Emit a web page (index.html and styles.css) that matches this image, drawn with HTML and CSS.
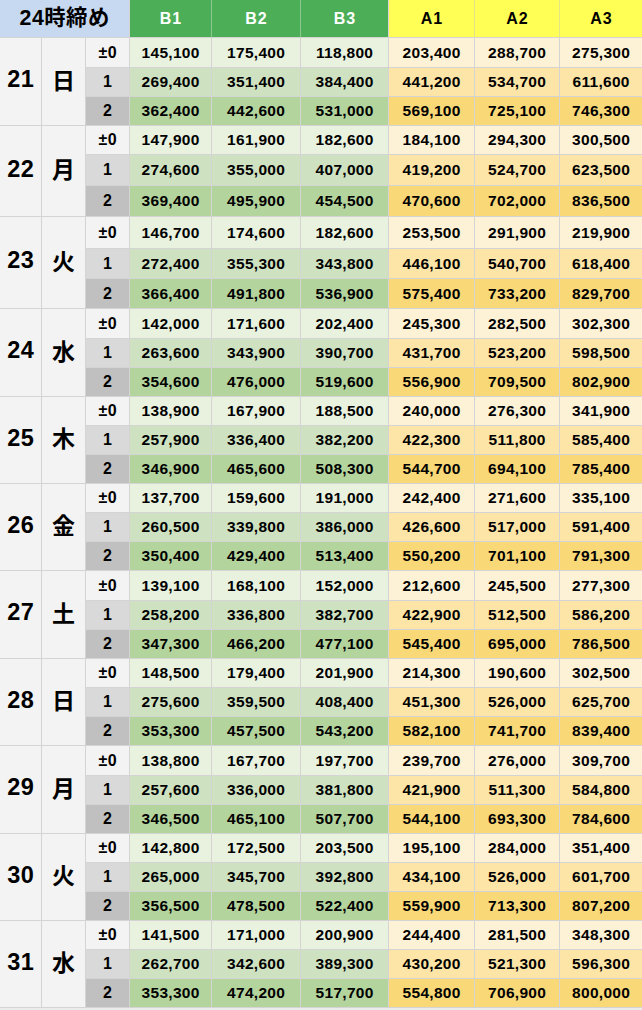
FILE: index.html
```html
<!DOCTYPE html>
<html lang="ja">
<head>
<meta charset="utf-8">
<title>24時締め</title>
<link rel="stylesheet" href="styles.css">
</head>
<body>
<div class="sheet">
  <div class="c head-title">24時締め</div>
  <div class="c head-b">B1</div>
  <div class="c head-b">B2</div>
  <div class="c head-b end">B3</div>
  <div class="c head-a">A1</div>
  <div class="c head-a">A2</div>
  <div class="c head-a last">A3</div>

  <div class="c day">21</div><div class="c wd">日</div>
  <div class="c sub s0">±0</div><div class="c b0">145,100</div><div class="c b0">175,400</div><div class="c b0">118,800</div><div class="c a0">203,400</div><div class="c a0">288,700</div><div class="c a0 last">275,300</div>
  <div class="c sub s1">1</div><div class="c b1">269,400</div><div class="c b1">351,400</div><div class="c b1">384,400</div><div class="c a1">441,200</div><div class="c a1">534,700</div><div class="c a1 last">611,600</div>
  <div class="c sub s2">2</div><div class="c b2">362,400</div><div class="c b2">442,600</div><div class="c b2">531,000</div><div class="c a2">569,100</div><div class="c a2">725,100</div><div class="c a2 last">746,300</div>

  <div class="c day">22</div><div class="c wd">月</div>
  <div class="c sub s0">±0</div><div class="c b0">147,900</div><div class="c b0">161,900</div><div class="c b0">182,600</div><div class="c a0">184,100</div><div class="c a0">294,300</div><div class="c a0 last">300,500</div>
  <div class="c sub s1">1</div><div class="c b1">274,600</div><div class="c b1">355,000</div><div class="c b1">407,000</div><div class="c a1">419,200</div><div class="c a1">524,700</div><div class="c a1 last">623,500</div>
  <div class="c sub s2">2</div><div class="c b2">369,400</div><div class="c b2">495,900</div><div class="c b2">454,500</div><div class="c a2">470,600</div><div class="c a2">702,000</div><div class="c a2 last">836,500</div>

  <div class="c day">23</div><div class="c wd">火</div>
  <div class="c sub s0">±0</div><div class="c b0">146,700</div><div class="c b0">174,600</div><div class="c b0">182,600</div><div class="c a0">253,500</div><div class="c a0">291,900</div><div class="c a0 last">219,900</div>
  <div class="c sub s1">1</div><div class="c b1">272,400</div><div class="c b1">355,300</div><div class="c b1">343,800</div><div class="c a1">446,100</div><div class="c a1">540,700</div><div class="c a1 last">618,400</div>
  <div class="c sub s2">2</div><div class="c b2">366,400</div><div class="c b2">491,800</div><div class="c b2">536,900</div><div class="c a2">575,400</div><div class="c a2">733,200</div><div class="c a2 last">829,700</div>

  <div class="c day">24</div><div class="c wd">水</div>
  <div class="c sub s0">±0</div><div class="c b0">142,000</div><div class="c b0">171,600</div><div class="c b0">202,400</div><div class="c a0">245,300</div><div class="c a0">282,500</div><div class="c a0 last">302,300</div>
  <div class="c sub s1">1</div><div class="c b1">263,600</div><div class="c b1">343,900</div><div class="c b1">390,700</div><div class="c a1">431,700</div><div class="c a1">523,200</div><div class="c a1 last">598,500</div>
  <div class="c sub s2">2</div><div class="c b2">354,600</div><div class="c b2">476,000</div><div class="c b2">519,600</div><div class="c a2">556,900</div><div class="c a2">709,500</div><div class="c a2 last">802,900</div>

  <div class="c day">25</div><div class="c wd">木</div>
  <div class="c sub s0">±0</div><div class="c b0">138,900</div><div class="c b0">167,900</div><div class="c b0">188,500</div><div class="c a0">240,000</div><div class="c a0">276,300</div><div class="c a0 last">341,900</div>
  <div class="c sub s1">1</div><div class="c b1">257,900</div><div class="c b1">336,400</div><div class="c b1">382,200</div><div class="c a1">422,300</div><div class="c a1">511,800</div><div class="c a1 last">585,400</div>
  <div class="c sub s2">2</div><div class="c b2">346,900</div><div class="c b2">465,600</div><div class="c b2">508,300</div><div class="c a2">544,700</div><div class="c a2">694,100</div><div class="c a2 last">785,400</div>

  <div class="c day">26</div><div class="c wd">金</div>
  <div class="c sub s0">±0</div><div class="c b0">137,700</div><div class="c b0">159,600</div><div class="c b0">191,000</div><div class="c a0">242,400</div><div class="c a0">271,600</div><div class="c a0 last">335,100</div>
  <div class="c sub s1">1</div><div class="c b1">260,500</div><div class="c b1">339,800</div><div class="c b1">386,000</div><div class="c a1">426,600</div><div class="c a1">517,000</div><div class="c a1 last">591,400</div>
  <div class="c sub s2">2</div><div class="c b2">350,400</div><div class="c b2">429,400</div><div class="c b2">513,400</div><div class="c a2">550,200</div><div class="c a2">701,100</div><div class="c a2 last">791,300</div>

  <div class="c day">27</div><div class="c wd">土</div>
  <div class="c sub s0">±0</div><div class="c b0">139,100</div><div class="c b0">168,100</div><div class="c b0">152,000</div><div class="c a0">212,600</div><div class="c a0">245,500</div><div class="c a0 last">277,300</div>
  <div class="c sub s1">1</div><div class="c b1">258,200</div><div class="c b1">336,800</div><div class="c b1">382,700</div><div class="c a1">422,900</div><div class="c a1">512,500</div><div class="c a1 last">586,200</div>
  <div class="c sub s2">2</div><div class="c b2">347,300</div><div class="c b2">466,200</div><div class="c b2">477,100</div><div class="c a2">545,400</div><div class="c a2">695,000</div><div class="c a2 last">786,500</div>

  <div class="c day">28</div><div class="c wd">日</div>
  <div class="c sub s0">±0</div><div class="c b0">148,500</div><div class="c b0">179,400</div><div class="c b0">201,900</div><div class="c a0">214,300</div><div class="c a0">190,600</div><div class="c a0 last">302,500</div>
  <div class="c sub s1">1</div><div class="c b1">275,600</div><div class="c b1">359,500</div><div class="c b1">408,400</div><div class="c a1">451,300</div><div class="c a1">526,000</div><div class="c a1 last">625,700</div>
  <div class="c sub s2">2</div><div class="c b2">353,300</div><div class="c b2">457,500</div><div class="c b2">543,200</div><div class="c a2">582,100</div><div class="c a2">741,700</div><div class="c a2 last">839,400</div>

  <div class="c day">29</div><div class="c wd">月</div>
  <div class="c sub s0">±0</div><div class="c b0">138,800</div><div class="c b0">167,700</div><div class="c b0">197,700</div><div class="c a0">239,700</div><div class="c a0">276,000</div><div class="c a0 last">309,700</div>
  <div class="c sub s1">1</div><div class="c b1">257,600</div><div class="c b1">336,000</div><div class="c b1">381,800</div><div class="c a1">421,900</div><div class="c a1">511,300</div><div class="c a1 last">584,800</div>
  <div class="c sub s2">2</div><div class="c b2">346,500</div><div class="c b2">465,100</div><div class="c b2">507,700</div><div class="c a2">544,100</div><div class="c a2">693,300</div><div class="c a2 last">784,600</div>

  <div class="c day">30</div><div class="c wd">火</div>
  <div class="c sub s0">±0</div><div class="c b0">142,800</div><div class="c b0">172,500</div><div class="c b0">203,500</div><div class="c a0">195,100</div><div class="c a0">284,000</div><div class="c a0 last">351,400</div>
  <div class="c sub s1">1</div><div class="c b1">265,000</div><div class="c b1">345,700</div><div class="c b1">392,800</div><div class="c a1">434,100</div><div class="c a1">526,000</div><div class="c a1 last">601,700</div>
  <div class="c sub s2">2</div><div class="c b2">356,500</div><div class="c b2">478,500</div><div class="c b2">522,400</div><div class="c a2">559,900</div><div class="c a2">713,300</div><div class="c a2 last">807,200</div>

  <div class="c day">31</div><div class="c wd">水</div>
  <div class="c sub s0">±0</div><div class="c b0">141,500</div><div class="c b0">171,000</div><div class="c b0">200,900</div><div class="c a0">244,400</div><div class="c a0">281,500</div><div class="c a0 last">348,300</div>
  <div class="c sub s1">1</div><div class="c b1">262,700</div><div class="c b1">342,600</div><div class="c b1">389,300</div><div class="c a1">430,200</div><div class="c a1">521,300</div><div class="c a1 last">596,300</div>
  <div class="c sub s2">2</div><div class="c b2">353,300</div><div class="c b2">474,200</div><div class="c b2">517,700</div><div class="c a2">554,800</div><div class="c a2">706,900</div><div class="c a2 last">800,000</div>
</div>
</body>
</html>
```

FILE: styles.css
```css
html, body {
  margin: 0;
  padding: 0;
  background: #ececec;
}

body {
  font-family: "Liberation Sans", Arial, "Noto Sans CJK JP", sans-serif;
  font-weight: 700;
  color: #000;
}

.sheet {
  display: grid;
  width: 642px;
  grid-template-columns: 42px 44px 44px 82px 89px 88px 86px 85px 82px;
  grid-template-rows:
    38px
    30px 29px 29px
    29px 31px 31px
    32px 30px 30px
    30px 29px 29px
    29px 29px 29px
    29px 29px 29px
    30px 29px 29px
    29px 29px 29px
    30px 29px 29px
    29px 29px 29px
    29px 29px 29px;
  background: #fff;
}

.c {
  box-sizing: border-box;
  display: flex;
  align-items: center;
  justify-content: center;
  border-right: 1px solid #d4d4d4;
  border-bottom: 1px solid #d4d4d4;
  font-size: 15.5px;
  letter-spacing: 0.3px;
  padding-left: 0.3px;
  line-height: 1;
  white-space: nowrap;
}

.c.last {
  border-right: none;
}

.head-title {
  grid-column: span 3;
  background: #c6d9f1;
  font-size: 21.33px;
  letter-spacing: 0.5px;
}

.head-b {
  background: #4caf57;
  border-right-color: #8cc992;
  color: #fff;
  font-size: 16px;
  letter-spacing: 1px;
  padding-left: 1px;
}

.head-b.end {
  border-right-color: #d4d4d4;
}

.head-a {
  background: #ffff55;
  border-right-color: #e4e48a;
  font-size: 16px;
  letter-spacing: 1px;
  padding-left: 1px;
}

.day {
  grid-row: span 3;
  background: #f3f3f3;
  font-size: 23.5px;
  letter-spacing: 0.6px;
  padding-left: 0.6px;
  padding-bottom: 3px;
}

.wd {
  grid-row: span 3;
  background: #f3f3f3;
  font-family: "Noto Sans CJK JP", sans-serif;
  font-size: 23px;
  letter-spacing: 0;
  padding-left: 0;
  padding-bottom: 5px;
}

.sub {
  font-size: 16px;
  letter-spacing: 0.5px;
  padding-left: 0.5px;
}

.s0 { background: #f3f3f3; }
.s1 { background: #d9d9d9; }
.s2 { background: #c0c0c0; }

.b0 { background: #e8f2df; }
.b1 { background: #cee2c1; }
.b2 { background: #b4d49d; }

.a0 { background: #fef2d6; }
.a1 { background: #fde5a7; }
.a2 { background: #f9d878; }
```
